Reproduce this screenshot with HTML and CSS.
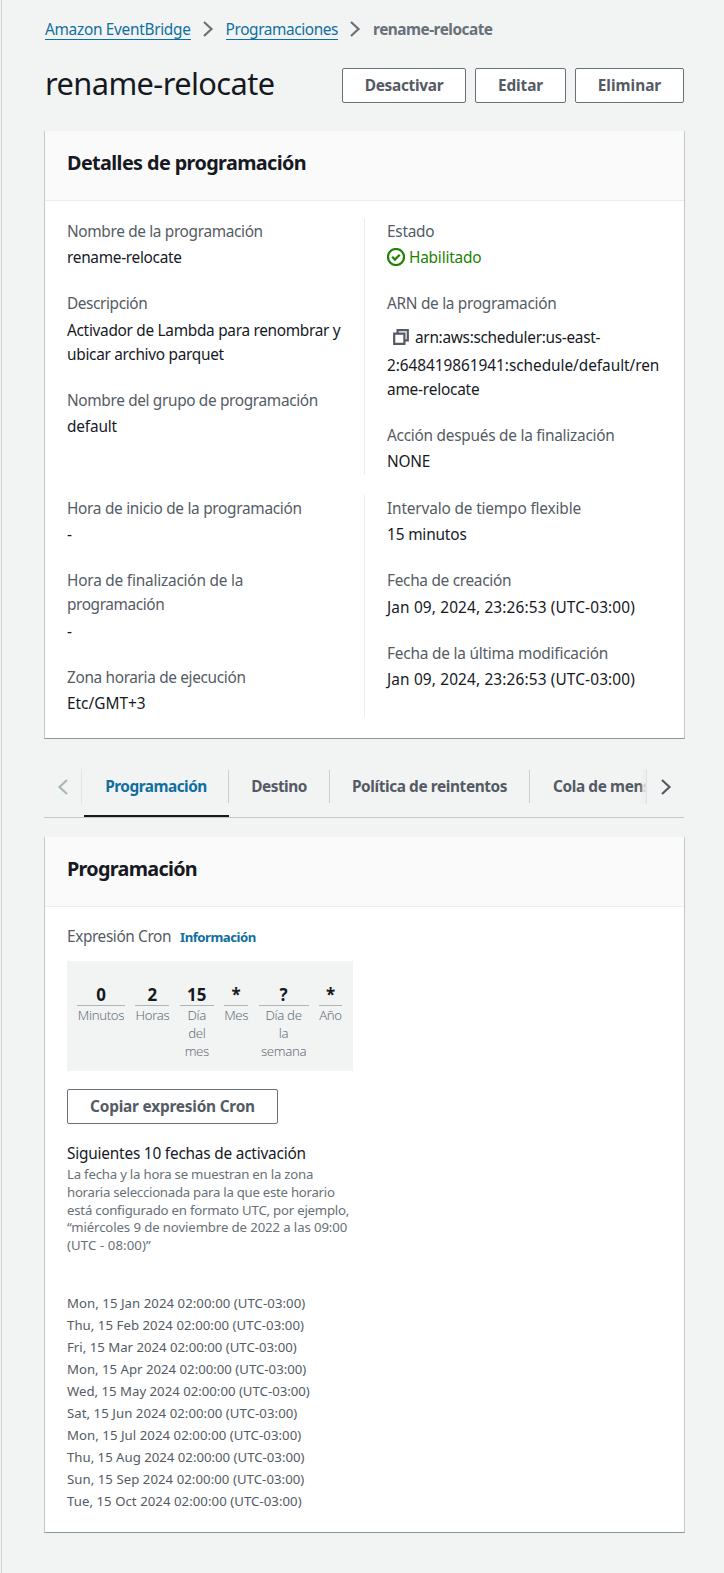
FILE: index.html
```
<!DOCTYPE html>
<html lang="es">
<head>
<meta charset="utf-8">
<title>rename-relocate</title>
<link rel="stylesheet" href="styles.css">
</head>
<body>
<main class="page">
  <nav class="breadcrumbs">
    <a class="crumb t30" href="#">Amazon EventBridge</a>
    <svg class="sep" viewBox="0 0 12 18"><path d="M2 2l7.5 7L2 16"/></svg>
    <a class="crumb t40" href="#">Programaciones</a>
    <svg class="sep" viewBox="0 0 12 18"><path d="M2 2l7.5 7L2 16"/></svg>
    <span class="crumb-current t50">rename-relocate</span>
  </nav>
  <header class="title-row">
    <h1 class="title t60">rename-relocate</h1>
    <div class="actions">
      <button class="btn btn-disable t30">Desactivar</button>
      <button class="btn btn-edit t10">Editar</button>
      <button class="btn btn-delete">Eliminar</button>
    </div>
  </header>

  <section class="card">
    <div class="card-head"><h2 class="card-title t60">Detalles de programación</h2></div>
    <div class="details">
      <div class="grid">
        <dl class="col">
          <div class="pair"><dt class="t35">Nombre de la programación</dt><dd class="t30">rename-relocate</dd></div>
          <div class="pair"><dt class="t40">Descripción</dt><dd class="t30">Activador de Lambda para renombrar y<br>ubicar archivo parquet</dd></div>
          <div class="pair"><dt class="t35">Nombre del grupo de programación</dt><dd class="t15">default</dd></div>
        </dl>
        <dl class="col">
          <div class="pair"><dt class="t25">Estado</dt><dd class="status t20"><svg class="ok" viewBox="0 0 18 18"><circle cx="9" cy="9" r="8"/><path d="M5.2 8.8l2.7 2.8 4.8-4.8"/></svg><span>Habilitado</span></dd></div>
          <div class="pair"><dt class="t30">ARN de la programación</dt><dd><span class="copy"><svg class="copy-icon" viewBox="0 0 16 16"><path d="M1.2 4.6h10.2v10.2H1.2z"/><path d="M4.6 4.2V1.2h10.2v10.2h-3"/></svg></span><span class="t30">arn:aws:scheduler:us-east-</span><br><span class="t05">2:648419861941:schedule/default/ren</span><br><span class="t20">ame-relocate</span></dd></div>
          <div class="pair"><dt class="t25">Acción después de la finalización</dt><dd class="t25">NONE</dd></div>
        </dl>
      </div>
      <div class="grid">
        <dl class="col">
          <div class="pair"><dt class="t30">Hora de inicio de la programación</dt><dd>-</dd></div>
          <div class="pair"><dt class="t20">Hora de finalización de la<br><span class="t40">programación</span></dt><dd>-</dd></div>
          <div class="pair"><dt class="t35">Zona horaria de ejecución</dt><dd>Etc/GMT+3</dd></div>
        </dl>
        <dl class="col">
          <div class="pair"><dt class="t15">Intervalo de tiempo flexible</dt><dd class="t15">15 minutos</dd></div>
          <div class="pair"><dt class="t30">Fecha de creación</dt><dd class="w15">Jan 09, 2024, 23:26:53 (UTC-03:00)</dd></div>
          <div class="pair"><dt class="t20">Fecha de la última modificación</dt><dd class="w15">Jan 09, 2024, 23:26:53 (UTC-03:00)</dd></div>
        </dl>
      </div>
    </div>
  </section>

  <nav class="tabs">
    <button class="scroll scroll-left"><svg class="chev" viewBox="0 0 12 18"><path d="M10 2L2.5 9l7.5 7"/></svg></button>
    <div class="tab-list">
      <a class="tab tab-active t50"><span class="tab-label">Programación</span></a>
      <a class="tab tab-target t50"><span class="tab-label">Destino</span></a>
      <a class="tab tab-retry t40"><span class="tab-label">Política de reintentos</span></a>
      <a class="tab tab-queue t40"><span class="tab-label">Cola de mensajes fallidos</span></a>
    </div>
    <button class="scroll scroll-right"><svg class="chev" viewBox="0 0 12 18"><path d="M2 2l7.5 7L2 16"/></svg></button>
  </nav>

  <section class="card card-schedule">
    <div class="card-head"><h2 class="card-title t70">Programación</h2></div>
    <div class="schedule">
      <div class="cron-label"><span class="t40">Expresión Cron</span><a class="info t50" href="#">Información</a></div>
      <div class="cron">
        <div class="field f-min"><b>0</b>Minutos</div>
        <div class="field f-hour"><b>2</b>Horas</div>
        <div class="field f-dom"><b>15</b>Día<br>del<br>mes</div>
        <div class="field f-mon"><b>*</b>Mes</div>
        <div class="field f-dow"><b>?</b>Día de<br>la<br>semana</div>
        <div class="field f-year"><b>*</b>Año</div>
      </div>
      <button class="btn btn-copy t20">Copiar expresión Cron</button>
      <h3 class="next t20">Siguientes 10 fechas de activación</h3>
      <p class="hint t20">La fecha y la hora se muestran en la zona<br><span class="t25">horaria seleccionada para la que este horario</span><br>está configurado en formato UTC, por ejemplo,<br><span class="t10">“miércoles 9 de noviembre de 2022 a las 09:00</span><br><span class="w10">(UTC - 08:00)”</span></p>
      <ul class="dates">
        <li class="w05">Mon, 15 Jan 2024 02:00:00 (UTC-03:00)</li>
        <li class="w05">Thu, 15 Feb 2024 02:00:00 (UTC-03:00)</li>
        <li>Fri, 15 Mar 2024 02:00:00 (UTC-03:00)</li>
        <li>Mon, 15 Apr 2024 02:00:00 (UTC-03:00)</li>
        <li>Wed, 15 May 2024 02:00:00 (UTC-03:00)</li>
        <li class="w05">Sat, 15 Jun 2024 02:00:00 (UTC-03:00)</li>
        <li class="w05">Mon, 15 Jul 2024 02:00:00 (UTC-03:00)</li>
        <li>Thu, 15 Aug 2024 02:00:00 (UTC-03:00)</li>
        <li class="w05">Sun, 15 Sep 2024 02:00:00 (UTC-03:00)</li>
        <li class="w05">Tue, 15 Oct 2024 02:00:00 (UTC-03:00)</li>
      </ul>
    </div>
  </section>
</main>
</body>
</html>
```
FILE: styles.css
```
* { box-sizing: border-box; }
body {
  margin: 0;
  background: #f2f4f4;
  color: #16191f;
  font: 15.4px/24.2px "Noto Sans", sans-serif;
}
h1, h2, h3, p, dl, dd, ul { margin: 0; padding: 0; font-weight: 400; }
ul { list-style: none; }
svg { fill: none; stroke: currentColor; stroke-width: 2.2; display: block; }
a { color: #0f6f9f; text-decoration: none; }
button { font: inherit; margin: 0; }

/* Tracking steps, in hundredths of a pixel: t = tighter, w = wider */
.t05 { letter-spacing: -0.05px; }
.t10 { letter-spacing: -0.11px; }
.t15 { letter-spacing: -0.16px; }
.t20 { letter-spacing: -0.21px; }
.t25 { letter-spacing: -0.26px; }
.t30 { letter-spacing: -0.3px; }
.t35 { letter-spacing: -0.35px; }
.t40 { letter-spacing: -0.4px; }
.t50 { letter-spacing: -0.51px; }
.t60 { letter-spacing: -0.6px; }
.t70 { letter-spacing: -0.7px; }
.w05 { letter-spacing: 0.05px; }
.w10 { letter-spacing: 0.1px; }
.w15 { letter-spacing: 0.14px; }

.page {
  min-height: 1573px;
  margin-left: 1px;
  padding: 18px 39px 0 42px;
  border-left: 1px solid #cdd2d3;
}

.breadcrumbs { display: flex; height: 24px; padding-left: 1px; }
.crumb { height: 22px; line-height: 24px; border-bottom: 1px solid #0f6f9f; }
.sep { width: 12px; height: 18px; margin: 2px 12px 0 11px; color: #687078; }
.crumb-current { color: #687078; font-weight: 700; }

.title-row { display: flex; justify-content: space-between; margin: 21px 1px 0; height: 68px; }
.title { font-size: 30.8px; line-height: 41px; }
.actions { display: flex; gap: 9px; margin-top: 5px; }
.btn {
  height: 35px;
  padding: 1px 0 0;
  border: 1px solid #687078;
  border-radius: 2px;
  background: #fff;
  color: #545b64;
  font-weight: 700;
  text-align: center;
  white-space: nowrap;
}
.btn-disable { width: 124px; }
.btn-edit { width: 91px; }
.btn-delete { width: 109px; }
.btn-copy { display: block; width: 211px; margin-top: 18px; }

.card {
  background: #fff;
  border: 1px solid #c3c8c9;
  border-top: 0;
  border-bottom: 1px solid #8d9698;
  height: 608px;
}
.card-head { height: 70px; padding: 18px 22px; background: #fafafa; border-bottom: 1px solid #eaeded; }
.card-title { font-size: 19.8px; line-height: 27px; font-weight: 700; }

.details { padding: 17px 22px 22px; }
.grid { display: grid; grid-template-columns: 297px 1fr; margin-bottom: 20.4px; }
.col { display: flex; flex-direction: column; gap: 22px; white-space: nowrap; padding-top: 1.6px; }
.col + .col { border-left: 1px solid #eaeded; padding-left: 22px; }
dt { color: #545b64; margin-bottom: 2.2px; }
.status { display: flex; gap: 4px; color: #1d8102; }
.ok { width: 18px; height: 18px; margin-top: 2px; }
.copy { display: inline-block; height: 35px; width: 28px; padding: 10px 0 0 6px; vertical-align: -11px; color: #545b64; }
.copy-icon { width: 16px; height: 16px; }

.tabs { display: flex; align-items: flex-start; height: 50px; margin: 29px 1px 0 0; border-bottom: 1px solid #c3c8c9; }
.scroll { width: 38px; height: 35px; margin-top: 1px; padding: 0 0 0 13px; border: 0; background: none; flex: none; color: #545b64; }
.scroll-left { color: #aab7b8; border-right: 1px solid #e2e5e5; }
.scroll-right { position: relative; border-left: 1px solid #dfe3e3; }
.scroll-right::before {
  content: "";
  position: absolute;
  left: -7px;
  top: 0;
  width: 6px;
  height: 35px;
  background: linear-gradient(to right, rgba(242, 244, 244, 0), #eceeee);
}
.chev { width: 12px; height: 18px; }
.tab-list { display: flex; flex: 1; overflow: hidden; height: 49px; padding-left: 2px; }
.tab { flex: none; height: 49px; padding-top: 2px; color: #545b64; font-weight: 700; text-align: center; white-space: nowrap; }
.tab-label { display: block; height: 33px; line-height: 33px; border-right: 1px solid #c9d0d1; }
.tab-active { width: 145px; color: #0f6f9f; border-bottom: 2px solid #16191f; }
.tab-target { width: 101px; }
.tab-retry { width: 200px; }
.tab-queue { padding-left: 23px; }

.card-schedule { margin-top: 19px; height: 696px; }
.schedule { padding: 18px 22px; }
.cron-label { color: #545b64; display: flex; }
.info { margin-left: 9px; font-size: 13.2px; font-weight: 700; }
.cron { display: flex; width: 286px; height: 110px; margin-top: 12px; padding: 23px 10px 0; background: #f2f4f4; gap: 10.4px; }
.field { text-align: center; font-size: 13.2px; line-height: 18px; font-weight: 300; color: #687078; letter-spacing: -0.35px; white-space: nowrap; }
.field b { display: block; height: 22px; font-size: 16.9px; line-height: 22px; font-weight: 700; color: #16191f; border-bottom: 1px solid #aab7b8; letter-spacing: 0; }
.f-min { width: 48px; }
.f-hour, .f-dom { width: 34px; }
.f-mon { width: 24px; }
.f-dow { width: 50px; }
.f-year { width: 23px; }
.next { font-size: 15.4px; margin-top: 18px; }
.hint { font-size: 13.2px; line-height: 17.6px; color: #687078; white-space: nowrap; }
.dates { margin-top: 38px; font-size: 13.2px; line-height: 22px; color: #545b64; }
```
